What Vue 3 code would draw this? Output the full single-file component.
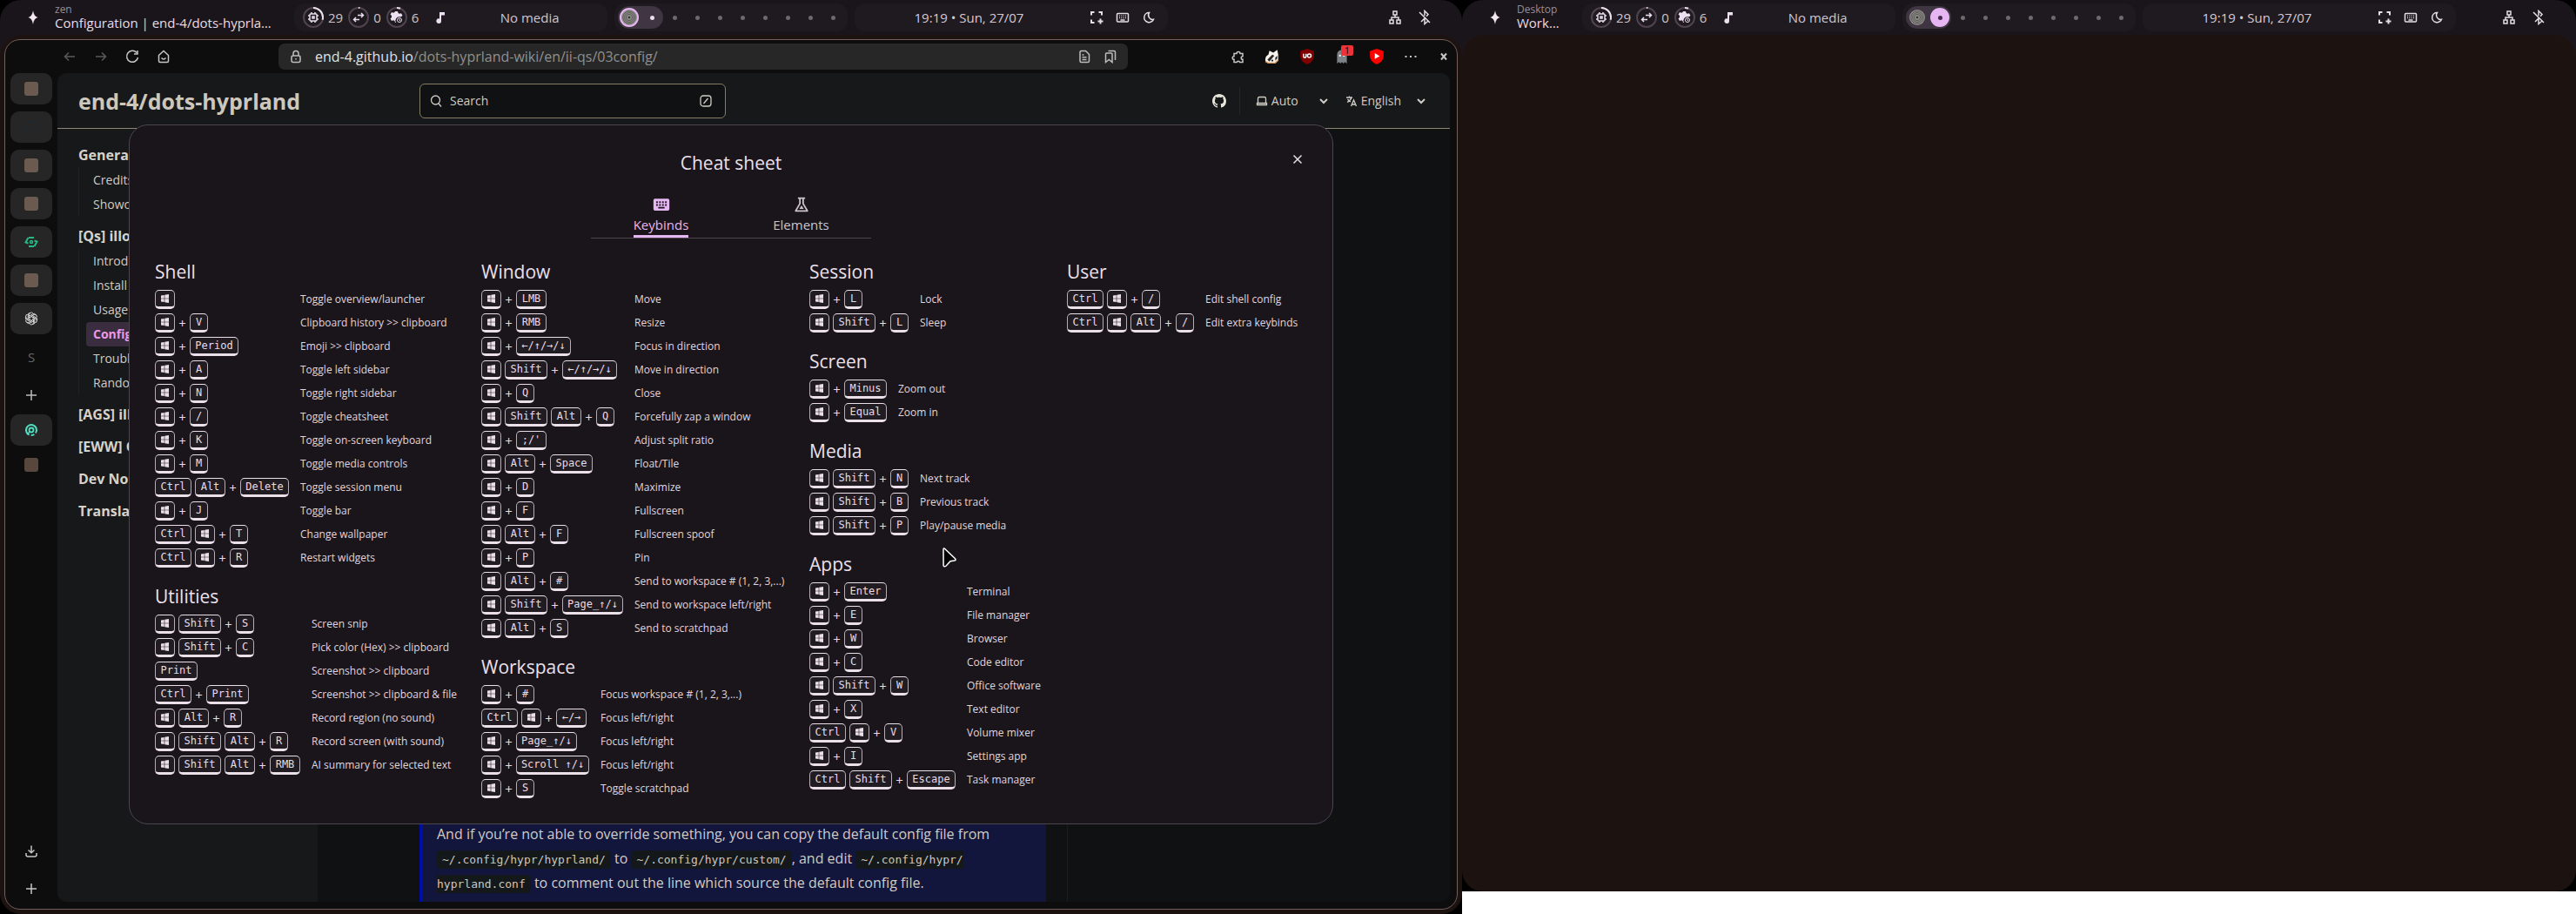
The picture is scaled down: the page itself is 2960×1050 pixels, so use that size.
<script setup>
const monitors = [
  { id: 'main', app: 'zen', title: 'Configuration | end-4/dots-hyprla…', active: 0, browser: true },
  { id: 'side', app: 'Desktop', title: 'Work…', active: 1, browser: false }
]

const resources = [
  { icon: 'cpu', value: 29 },
  { icon: 'swap', value: 0 },
  { icon: 'gear', value: 6 }
]

const W = 'Super'
const columns = [
  [
    {
      title: 'Shell',
      binds: [
        [[W], '', 'Toggle overview/launcher'],
        [[W], 'V', 'Clipboard history >> clipboard'],
        [[W], 'Period', 'Emoji >> clipboard'],
        [[W], 'A', 'Toggle left sidebar'],
        [[W], 'N', 'Toggle right sidebar'],
        [[W], '/', 'Toggle cheatsheet'],
        [[W], 'K', 'Toggle on-screen keyboard'],
        [[W], 'M', 'Toggle media controls'],
        [['Ctrl', 'Alt'], 'Delete', 'Toggle session menu'],
        [[W], 'J', 'Toggle bar'],
        [['Ctrl', W], 'T', 'Change wallpaper'],
        [['Ctrl', W], 'R', 'Restart widgets']
      ]
    },
    {
      title: 'Utilities',
      binds: [
        [[W, 'Shift'], 'S', 'Screen snip'],
        [[W, 'Shift'], 'C', 'Pick color (Hex) >> clipboard'],
        [['Print'], '', 'Screenshot >> clipboard'],
        [['Ctrl'], 'Print', 'Screenshot >> clipboard & file'],
        [[W, 'Alt'], 'R', 'Record region (no sound)'],
        [[W, 'Shift', 'Alt'], 'R', 'Record screen (with sound)'],
        [[W, 'Shift', 'Alt'], 'RMB', 'AI summary for selected text']
      ]
    }
  ],
  [
    {
      title: 'Window',
      binds: [
        [[W], 'LMB', 'Move'],
        [[W], 'RMB', 'Resize'],
        [[W], '←/↑/→/↓', 'Focus in direction'],
        [[W, 'Shift'], '←/↑/→/↓', 'Move in direction'],
        [[W], 'Q', 'Close'],
        [[W, 'Shift', 'Alt'], 'Q', 'Forcefully zap a window'],
        [[W], ";/'", 'Adjust split ratio'],
        [[W, 'Alt'], 'Space', 'Float/Tile'],
        [[W], 'D', 'Maximize'],
        [[W], 'F', 'Fullscreen'],
        [[W, 'Alt'], 'F', 'Fullscreen spoof'],
        [[W], 'P', 'Pin'],
        [[W, 'Alt'], '#', 'Send to workspace # (1, 2, 3,...)'],
        [[W, 'Shift'], 'Page_↑/↓', 'Send to workspace left/right'],
        [[W, 'Alt'], 'S', 'Send to scratchpad']
      ]
    },
    {
      title: 'Workspace',
      binds: [
        [[W], '#', 'Focus workspace # (1, 2, 3,...)'],
        [['Ctrl', W], '←/→', 'Focus left/right'],
        [[W], 'Page_↑/↓', 'Focus left/right'],
        [[W], 'Scroll ↑/↓', 'Focus left/right'],
        [[W], 'S', 'Toggle scratchpad']
      ]
    }
  ],
  [
    {
      title: 'Session',
      binds: [
        [[W], 'L', 'Lock'],
        [[W, 'Shift'], 'L', 'Sleep']
      ]
    },
    {
      title: 'Screen',
      binds: [
        [[W], 'Minus', 'Zoom out'],
        [[W], 'Equal', 'Zoom in']
      ]
    },
    {
      title: 'Media',
      binds: [
        [[W, 'Shift'], 'N', 'Next track'],
        [[W, 'Shift'], 'B', 'Previous track'],
        [[W, 'Shift'], 'P', 'Play/pause media']
      ]
    },
    {
      title: 'Apps',
      binds: [
        [[W], 'Enter', 'Terminal'],
        [[W], 'E', 'File manager'],
        [[W], 'W', 'Browser'],
        [[W], 'C', 'Code editor'],
        [[W, 'Shift'], 'W', 'Office software'],
        [[W], 'X', 'Text editor'],
        [['Ctrl', W], 'V', 'Volume mixer'],
        [[W], 'I', 'Settings app'],
        [['Ctrl', 'Shift'], 'Escape', 'Task manager']
      ]
    }
  ],
  [
    {
      title: 'User',
      binds: [
        [['Ctrl', W], '/', 'Edit shell config'],
        [['Ctrl', W, 'Alt'], '/', 'Edit extra keybinds']
      ]
    }
  ]
]

const keyWidth = (key) => ({ width: `${key.length * 7 + 14}px` })

const nav = [
  { title: 'General', links: ['Credits', 'Showcase'] },
  { title: '[Qs] illo…', links: ['Introdu…', 'Install', 'Usage', 'Config', 'Trouble', 'Random'] },
  { title: '[AGS] illo…', links: [] },
  { title: '[EWW] Ol…', links: [] },
  { title: 'Dev Notes', links: [] },
  { title: 'Translate', links: [] }
]

const tabs = ['blank', 'cat', 'blank', 'blank', 'leaf', 'blank', 'knot']
</script>

<template>
  <div class="desktop">
    <section v-for="m in monitors" :key="m.id" class="monitor" :class="m.id">
      <header class="bar">
        <div class="bar-left">
          <svg class="spark" viewBox="0 0 20 20"><path d="M10 2c.9 4.900 2.200 6.800 5.500 8-3.300 1.200-4.600 3.100-5.500 8-.9-4.900-2.200-6.800-5.500-8C7.800 8.800 9.100 6.900 10 2z" /></svg>
          <div class="win">
            <span class="win-app">{{ m.app }}</span>
            <span class="win-title">{{ m.title }}</span>
          </div>
        </div>

        <div class="bar-mid">
          <div class="pill side-pill stats">
            <div v-for="r in resources" :key="r.icon" class="res">
              <svg class="ring" viewBox="0 0 24 24">
                <circle class="track" cx="12" cy="12" r="11" />
                <circle class="arc" cx="12" cy="12" r="11" pathLength="100" :stroke-dasharray="`${r.value || 2} 100`" transform="rotate(-90 12 12)" />
                <g v-if="r.icon === 'cpu'" class="glyph thin">
                  <rect x="8" y="8" width="8" height="8" rx="1" /><rect x="11" y="11" width="2" height="2" />
                  <path d="M10 6v2M14 6v2M10 16v2M14 16v2M6 10h2M6 14h2M16 10h2M16 14h2" />
                </g>
                <g v-else-if="r.icon === 'swap'" class="glyph thin">
                  <path d="M11 9.500h6.500M15 7l2.500 2.500L15 12M13 14.500H6.500M9 12l-2.500 2.500L9 17" />
                </g>
                <g v-else>
                  <path class="solid" d="M10 5h3l.5 2 1.500.8 2-.6 1.500 2.600-1.500 1.400h-2a4.500 4.500 0 0 0-4 6.800h-1l-.5-1.900-1.500-.8-2 .6-1.500-2.600L6 11.900v-1.800L4.500 8.700 6 6.100l2 .6L9.500 6z" />
                  <circle class="mini" cx="15" cy="15" r="2.500" /><path class="mini" d="M15 13.600V15l1 1" />
                </g>
              </svg>
              <span>{{ r.value }}</span>
            </div>
            <svg class="note" viewBox="0 0 14 16"><path d="M6 2h6v3.500H8V12a2.800 2.800 0 1 1-2-2.600z" /></svg>
            <span class="media">No media</span>
          </div>

          <div class="pill spaces">
            <span v-for="n in 10" :key="n" class="space" :class="{ busy: n < 3, first: n === 1, last: n === 2, on: n - 1 === m.active }">
              <svg v-if="n === 1" class="zen" viewBox="0 0 20 20">
                <circle cx="10" cy="10" r="10" class="zen-bg" />
                <circle cx="10" cy="10" r="8" /><circle cx="10" cy="10" r="6" /><circle cx="10" cy="10" r="4" />
                <circle cx="10" cy="10" r="1.500" class="zen-dot" />
              </svg>
              <i v-else class="dot" />
            </span>
          </div>

          <div class="pill side-pill">
            <span class="clock">19:19 • Sun, 27/07</span>
            <button class="tool" aria-label="Screenshot"><svg viewBox="0 0 16 16"><path d="M2 5.500V2h3.500M10.500 2H14v3.500M2 10.500V14h3.500M12.500 9.500v6M9.500 12.500h6" /></svg></button>
            <button class="tool" aria-label="Keyboard"><svg viewBox="0 0 16 16"><rect x="1.500" y="3.500" width="13" height="9.500" rx="1" /><path d="M4 6.200h1M6.300 6.200h1M8.700 6.200h1M11 6.200h1M4 8.500h1M6.300 8.500h1M8.700 8.500h1M11 8.500h1M5.500 11h5" stroke-width="1.300" /></svg></button>
            <button class="tool" aria-label="Dark mode"><svg viewBox="0 0 16 16"><path d="M8.500 2.500a5.600 5.600 0 1 0 5 7.800A5 5 0 0 1 8.500 2.500z" /></svg></button>
          </div>
        </div>

        <div class="bar-right">
          <svg viewBox="0 0 18 18"><rect x="7" y="2" width="4" height="4" /><rect x="3" y="12" width="4" height="4" /><rect x="11" y="12" width="4" height="4" /><path d="M9 6v3M5 12V9h8v3" /></svg>
          <svg viewBox="0 0 18 18"><path d="M3 3l12 12M5 14l4-4v6.500l3.500-3M9 7V1.500L13 5.500l-2 2.200" /></svg>
        </div>
      </header>

      <main class="area">
        <div v-if="m.browser" class="browser">
          <div class="toolbar">
            <div class="nav-buttons">
              <button class="ghost faded" aria-label="Back"><svg viewBox="0 0 16 16"><path d="M14 8H2.500M7 3.500L2.500 8 7 12.500" /></svg></button>
              <button class="ghost faded" aria-label="Forward"><svg viewBox="0 0 16 16"><path d="M2 8h11.500M9 3.500L13.500 8 9 12.500" /></svg></button>
              <button class="ghost" aria-label="Reload"><svg viewBox="0 0 16 16"><path d="M13 3.500A6.500 6.500 0 1 0 14.500 9M14 1v4h-4" /></svg></button>
              <button class="ghost" aria-label="Home"><svg viewBox="0 0 16 16"><path d="M2.500 6.500L8 1.500l5.500 5V13q0 1.500-1.500 1.500H4Q2.500 14.500 2.500 13zM5.500 9.500q2.500 3 5 0" /></svg></button>
            </div>
            <div class="address">
              <svg viewBox="0 0 16 16"><rect x="3" y="7" width="10" height="7.500" rx="2" /><path d="M5 7V4.500a3 3 0 0 1 6 0V7M8 10v1.500" /></svg>
              <span class="url"><b>end-4.github.io</b>/dots-hyprland-wiki/en/ii-qs/03config/</span>
              <svg viewBox="0 0 16 16"><path d="M4.500 1.500h5l4 4v7.500q0 1.500-1.500 1.500H4.500Q3 14.500 3 13V3q0-1.500 1.500-1.500zM5.500 6h2M5.500 8.800h5M5.500 11.500h5" /></svg>
              <svg viewBox="0 0 16 16"><path d="M2.500 5q0-1 1-1H9q1 0 1 1v9.500L6.300 11.500 2.500 14.500zM5.500 1.500h6.500q1.500 0 1.500 1.500v9" /></svg>
            </div>
            <div class="addons">
              <button class="ghost" aria-label="Extensions"><svg viewBox="0 0 16 16"><path d="M3 4.500h3a2 2 0 1 1 4 0h3v3.200a1.800 1.800 0 1 0 0 3.600v3.200H9.500a1.700 1.700 0 0 0-3.300 0H3v-3.200a1.800 1.800 0 1 1 0-3.600z" /></svg></button>
              <svg class="addon" viewBox="0 0 16 16"><path d="M1 13q-1-5 3-7l1-4 4 2 4-3 1 5v6l-4 3H4z" fill="#f5f1ec" /><path d="M3 11l5-5 2 1-5 6zM11 9l2-2v3l-2 2z" fill="#2b2725" /><path d="M1 13l3 1.500h7l3-3" fill="none" stroke="#d99a62" stroke-width="1.200" /><circle cx="8" cy="12" r="1" fill="#222" /></svg>
              <svg class="addon" viewBox="0 0 16 16"><path d="M8 0l7 2.500V7q0 6-7 9Q1 13 1 7V2.500z" fill="#800000" /><path d="M4.300 5v2.800a1.300 1.300 0 0 0 2.600 0V5" fill="none" stroke="#fff" stroke-width="1.300" /><circle cx="10.200" cy="7.200" r="1.800" fill="none" stroke="#fff" stroke-width="1.300" /></svg>
              <span class="badged">
                <svg class="addon" viewBox="0 0 16 16"><path d="M3 15V6a5 5 0 0 1 10 0v9l-2-1.500L9.500 15 8 13.500 6.500 15 5 13.500z" fill="#7d8287" /><circle cx="6" cy="7" r="1" fill="#fff" /><circle cx="10" cy="7" r="1" fill="#fff" /></svg>
                <em class="badge">1</em>
              </span>
              <svg class="addon" viewBox="0 0 16 16"><path d="M8 0l7 2.500V7q0 6-7 9Q1 13 1 7V2.500z" fill="#f00" /><path d="M6 4.500l5 3-5 3z" fill="#fff" /></svg>
              <button class="ghost" aria-label="Menu"><svg viewBox="0 0 16 16"><path d="M1.500 8h2M7 8h2M12.500 8h2" stroke-width="2" /></svg></button>
              <button class="ghost" aria-label="Close window"><svg viewBox="0 0 16 16"><path d="M5 4.500l6 7M11 4.500l-6 7" stroke-width="2" /></svg></button>
            </div>
          </div>

          <div class="browser-body">
            <aside class="tabstrip">
              <div v-for="(t, i) in tabs" :key="i" class="tab filled">
                <i v-if="t === 'blank'" class="favicon" />
                <svg v-else-if="t === 'cat'" viewBox="0 0 16 16"><path d="M4.500 14A7 7 0 1 1 11.500 14" fill="none" stroke="#1f282e" stroke-width="2" stroke-dasharray="5 1" /></svg>
                <svg v-else-if="t === 'leaf'" viewBox="0 0 16 16" fill="none" stroke="#26b983" stroke-width="2"><path d="M5 3h6M11 13H5M4.500 3L1.500 8.500l3 1M11.500 13l3-5.500-3-1" /><circle cx="8" cy="8" r="1.500" stroke-width="1.500" /></svg>
                <svg v-else viewBox="0 0 16 16" fill="none" stroke="#d6d6d6" stroke-width="1">
                  <g v-for="a in 6" :key="a" :transform="`rotate(${a * 60} 8 8)`"><path d="M8 5.700L5.500 7V3.500a2.500 2.500 0 0 1 4.300-1.700M5.800 5l3.900-2.300a2.500 2.500 0 0 1 3.400 1" /></g>
                </svg>
              </div>
              <div class="tab letter">S</div>
              <div class="tab"><svg viewBox="0 0 16 16"><path d="M8 2v12M2 8h12" stroke="#bdbdbd" stroke-width="1.500" /></svg></div>
              <div class="tab filled tight">
                <svg viewBox="0 0 16 16" fill="none" stroke="#4fe0c3"><circle cx="8" cy="8" r="6" stroke-width="2" stroke-dasharray="24 2 4 2" transform="rotate(160 8 8)" /><circle cx="8" cy="8" r="2.500" stroke-width="1.800" /><path d="M3 13l3-3" stroke-width="1.500" /></svg>
              </div>
              <div class="tab"><i class="favicon dim" /></div>
              <div class="tab-foot">
                <button class="ghost" aria-label="Downloads"><svg viewBox="0 0 16 16"><path d="M8 1.500v8M4.500 6.500L8 9.700l3.500-3.200M2 10v2q0 2 2 2h8q2 0 2-2v-2" /></svg></button>
                <button class="ghost" aria-label="New tab"><svg viewBox="0 0 16 16"><path d="M8 2v12M2 8h12" /></svg></button>
              </div>
            </aside>

            <div class="site">
              <div class="site-head">
                <a class="site-title" href="#">end-4/dots-hyprland</a>
                <button class="search">
                  <svg viewBox="0 0 16 16"><circle cx="7.500" cy="7" r="5" /><path d="M11 11l3 3.500" /></svg>
                  <span>Search</span>
                  <svg viewBox="0 0 16 16"><rect x="2" y="2" width="12" height="12" rx="3" /><path d="M5.500 11l5-6" /></svg>
                </button>
                <div class="site-tools">
                  <a class="github" href="#" aria-label="GitHub"><svg viewBox="0 0 16 16"><path d="M8 0C3.580 0 0 3.580 0 8c0 3.540 2.290 6.530 5.470 7.590.4.070.55-.17.55-.38 0-.19-.01-.82-.01-1.490-2.010.37-2.530-.49-2.690-.94-.09-.23-.48-.94-.82-1.130-.28-.15-.68-.52-.01-.53.63-.01 1.080.58 1.230.82.72 1.210 1.870.87 2.330.66.07-.52.28-.87.51-1.070-1.780-.2-3.640-.89-3.640-3.950 0-.87.31-1.590.82-2.150-.08-.2-.36-1.020.08-2.120 0 0 .67-.21 2.200.82.64-.18 1.320-.27 2-.27s1.360.09 2 .27c1.530-1.040 2.200-.82 2.200-.82.44 1.100.16 1.920.08 2.120.51.56.82 1.270.82 2.150 0 3.070-1.870 3.750-3.650 3.950.29.25.54.73.54 1.480 0 1.070-.01 1.930-.01 2.200 0 .21.15.46.55.38A8.010 8.010 0 0 0 16 8c0-4.420-3.580-8-8-8z" /></svg></a>
                  <button class="pick theme">
                    <svg viewBox="0 0 14 14"><path d="M2.500 9V4q0-1.500 1.500-1.500h6q1.500 0 1.500 1.500v5M1.500 9.500h11v2h-11z" /></svg>
                    <span>Auto</span>
                    <svg class="chev" viewBox="0 0 14 14"><path d="M3 5l4 4 4-4" /></svg>
                  </button>
                  <button class="pick">
                    <svg viewBox="0 0 14 14"><path d="M1 3h7M4.500 1.500V3M7 3q-1 3.500-5 5.500M2.500 5q1.500 2 3.500 3M6.500 13L9.500 6l3 7M7.500 11h4" /></svg>
                    <span>English</span>
                    <svg class="chev" viewBox="0 0 14 14"><path d="M3 5l4 4 4-4" /></svg>
                  </button>
                </div>
              </div>

              <div class="site-body">
                <nav class="side-nav">
                  <div v-for="g in nav" :key="g.title" class="nav-group">
                    <strong>{{ g.title }}</strong>
                    <ul v-if="g.links.length">
                      <li v-for="l in g.links" :key="l"><a href="#" :class="{ current: l === 'Config' }">{{ l }}</a></li>
                    </ul>
                  </div>
                </nav>
                <article class="doc">
                  <p class="callout">And if you’re not able to override something, you can copy the default config file from <br><code>~/.config/hypr/hyprland/</code> to <code>~/.config/hypr/custom/</code>, and edit <code>~/.config/hypr/<br>hyprland.conf</code> to comment out the line which source the default config file.</p>
                </article>
                <div class="toc" />
              </div>
            </div>
          </div>
        </div>

        <div v-if="m.browser" class="overlay">
          <section class="sheet">
            <button class="close" aria-label="Close"><svg viewBox="0 0 16 16"><path d="M3.500 3.500l9 9M12.500 3.500l-9 9" /></svg></button>
            <h1>Cheat sheet</h1>
            <div class="sheet-tabs">
              <button class="sheet-tab selected">
                <svg viewBox="0 0 24 24"><path fill-rule="evenodd" d="M4 4.500h16q2 0 2 2v11q0 2-2 2H4q-2 0-2-2v-11q0-2 2-2zM5.500 8v2h2V8zM9.200 8v2h2V8zM12.900 8v2h2V8zM16.600 8v2h2V8zM5.500 11.500v2h2v-2zM9.200 11.500v2h2v-2zM12.900 11.500v2h2v-2zM16.600 11.500v2h2v-2zM8 15v2h8v-2z" /></svg>
                <span>Keybinds</span>
              </button>
              <button class="sheet-tab">
                <svg viewBox="0 0 24 24"><path fill-rule="evenodd" d="M7.500 3h9v2H15v5.500l5 8.500q1 2-1 2H5q-2 0-1-2l5-8.500V5H7.500zM11 5v6l-4.800 8h11.600L13 11V5zM12 13l2.800 4.500H9.200z" /></svg>
                <span>Elements</span>
              </button>
            </div>
            <div class="columns">
              <div v-for="(col, c) in columns" :key="c" class="column">
                <section v-for="s in col" :key="s.title">
                  <h2>{{ s.title }}</h2>
                  <table>
                    <tbody>
                      <tr v-for="([mods, key, label], i) in s.binds" :key="i">
                        <th scope="row">
                          <div class="combo">
                            <template v-for="k in mods" :key="k">
                              <kbd v-if="k === W" class="super"><svg viewBox="0 0 9 10" aria-label="Super"><path d="M0 1.500l3.700-.6v3.800H0zM4.300.8L9 0v4.700H4.300zM0 5.300h3.700v3.800L0 8.500zM4.300 5.300H9V10l-4.700-.8z" /></svg></kbd>
                              <kbd v-else :style="keyWidth(k)">{{ k }}</kbd>
                            </template>
                            <template v-if="key"><span class="plus">+</span><kbd :style="keyWidth(key)">{{ key }}</kbd></template>
                          </div>
                        </th>
                        <td>{{ label }}</td>
                      </tr>
                    </tbody>
                  </table>
                </section>
              </div>
            </div>
          </section>
          <svg class="cursor" viewBox="0 0 18 24"><path d="M2 3.500q0-2.500 2-.8l11.500 11q1.600 2-.8 2.300l-4.700.8-4.800 5.200q-2.700 2-3.100-.7z" /></svg>
        </div>
      </main>
    </section>
  </div>
</template>

<style>
body { margin: 0; background: #fff; }
</style>

<style scoped>
.desktop {
  display: grid;
  grid-template-columns: 1680fr 1280fr;
  min-height: 100vh;
  font-family: "Open Sans", "Noto Sans", sans-serif;
  font-size: 15px;
  color: #e6dde5;
}
.desktop *, .desktop *::before { box-sizing: border-box; }
h1, h2, p, ul { margin: 0; padding: 0; font-weight: 400; list-style: none; }
button { font: inherit; color: inherit; background: none; border: 0; padding: 0; }
a { color: inherit; text-decoration: none; }
svg { display: block; flex: none; }

.monitor { display: flex; flex-direction: column; min-width: 0; background: #000; overflow: hidden; }
.side { margin-bottom: 26px; }

/* top bar */
.bar {
  display: grid;
  grid-template-columns: 1fr auto 1fr;
  align-items: center;
  height: 40px;
  background: #1a151b;
  border-radius: 24px 24px 0 0;
}
.bar-left { display: flex; align-items: center; gap: 15px; padding-left: 28px; min-width: 0; }
.spark { width: 20px; height: 20px; fill: #f3e9f2; }
.win { display: flex; flex-direction: column; white-space: nowrap; line-height: 18px; }
.win-app { font-size: 12px; line-height: 12px; color: #978e97; }
.bar-mid { display: flex; gap: 8px; }
.pill { display: flex; align-items: center; height: 32px; background: #1f1a1f; border-radius: 12px; }
.side-pill { width: 360px; padding: 0 7px 0 0; }
.stats { gap: 6px; padding: 0 0 0 10px; color: #cfc5ce; }
.res { display: flex; align-items: center; gap: 5px; }
.ring { width: 24px; height: 24px; fill: none; }
.track { stroke: #4f4350; stroke-width: 2; }
.arc { stroke: #ecdfee; stroke-width: 2; }
.glyph { stroke: #ecdff0; stroke-width: 2; }
.thin { stroke-width: 1.5; }
.solid { fill: #ecdff0; }
.mini { stroke: #ecdff0; stroke-width: 1; }
.note { width: 14px; height: 16px; margin-left: 12px; fill: #ecdff0; }
.media { flex: 1; text-align: center; }
.spaces { padding: 0 4px; }
.space { display: grid; place-items: center; width: 26px; height: 26px; position: relative; }
.dot { width: 5px; height: 5px; border-radius: 50%; background: #6e686f; }
.busy { background: #403543; }
.first { border-radius: 13px 0 0 13px; }
.last { border-radius: 0 13px 13px 0; }
.busy .dot { background: #ecdfee; }
.on::before { content: ""; position: absolute; inset: 2px; border-radius: 50%; background: #e5b6f2; }
.on .dot, .on .zen { position: relative; }
.on .dot { background: #452b4e; }
.zen { width: 18px; height: 18px; fill: none; stroke: #55534f; stroke-width: 1; }
.zen-bg { fill: #8f8d8a; stroke: none; }
.zen-dot { fill: #333; stroke: none; }
.clock { flex: 1; text-align: center; color: #d6c9d3; }
.tool { display: grid; place-items: center; width: 30px; height: 32px; }
.tool svg, .bar-right svg { width: 16px; height: 16px; fill: none; stroke: #e6dde5; stroke-width: 2; }
.tool rect, .tool:last-child path { stroke-width: 1.5; }
.bar-right { display: flex; justify-content: flex-end; gap: 16px; padding-right: 34px; }
.bar-right svg { width: 18px; height: 18px; stroke-width: 1.5; }

/* workspace area */
.area { flex: 1; display: flex; position: relative; padding: 5px; background: #1c1210; border-radius: 0 0 24px 24px; }
.area::before {
  content: "";
  position: absolute;
  inset: 0 0 auto;
  height: 24px;
  background:
    radial-gradient(circle at 24px 24px, transparent 23px, #1a151b 24px) 0 0 / 24px 24px no-repeat,
    radial-gradient(circle at 0 24px, transparent 23px, #1a151b 24px) 100% 0 / 24px 24px no-repeat;
}

/* browser */
.browser {
  position: relative;
  flex: 1;
  display: flex;
  flex-direction: column;
  min-width: 0;
  background: #0d0d0d;
  border: 1px solid #735f5d;
  border-radius: 18px;
  padding-bottom: 8px;
}
.toolbar { display: flex; align-items: center; height: 38px; }
.nav-buttons { display: flex; gap: 20px; flex: 0 0 314px; padding-left: 66px; }
.ghost { display: grid; place-items: center; width: 16px; height: 20px; color: #c6c6c6; }
.ghost svg, .address svg { width: 16px; height: 16px; fill: none; stroke: currentColor; stroke-width: 1.5; }
.faded { color: #5a5a5a; }
.address { flex: 1; display: flex; align-items: center; gap: 14px; height: 30px; padding: 0 12px; background: #272727; border-radius: 7px; font-size: 16px; color: #8f8f8f; }
.address svg { color: #bdbdbd; }
.url { flex: 1; }
.url b { font-weight: 400; color: #e0e0e0; }
.addons { display: flex; align-items: center; justify-content: flex-end; flex: 0 0 378px; gap: 22px; padding-right: 7px; }
.addon { width: 18px; height: 18px; }
.badged { position: relative; }
.badge { position: absolute; left: 8px; top: -4px; width: 14px; height: 12px; background: #ee3338; border-radius: 2px; font: 11px/12px "Open Sans", sans-serif; text-align: center; color: #200; }
.browser-body { flex: 1; display: flex; min-height: 0; }

.tabstrip { display: flex; flex-direction: column; gap: 8px; width: 60px; padding: 0 6px; }
.tab { display: grid; place-items: center; height: 36px; border-radius: 10px; }
.tab svg { width: 16px; height: 16px; }
.filled { background: #262626; }
.tight { margin: -4px 0; }
.letter { color: #666; }
.favicon { width: 16px; height: 16px; border-radius: 3px; background: #6b5a4f; }
.dim { background: #58473d; }
.tab-foot { margin-top: auto; display: flex; flex-direction: column; align-items: center; gap: 23px; padding-bottom: 5px; }

/* site */
.site { flex: 1; display: flex; flex-direction: column; min-width: 0; margin-right: 8px; border-radius: 10px; overflow: hidden; background: #0f1113; color: #d0cbc3; }
.site-head { display: flex; align-items: center; height: 64px; padding: 0 26px 0 24px; background: #17181a; border-bottom: 1px solid #8f8776; font-size: 14px; }
.site-title { flex: 0 0 392px; font-size: 25px; font-weight: 700; color: #cdc7bd; }
.search { display: flex; align-items: center; gap: 8px; width: 352px; height: 40px; padding: 0 14px 0 10px; background: #0f1113; border: 1px solid #857c66; border-radius: 6px; text-align: left; }
.search span { flex: 1; }
.search svg, .pick svg { width: 16px; height: 16px; fill: none; stroke: #d0cbc3; stroke-width: 1.3; }
.site-tools { margin-left: auto; display: flex; align-items: center; gap: 18px; }
.github { display: flex; align-items: center; height: 32px; padding-right: 15px; border-right: 1px solid #232527; }
.github svg { width: 16px; height: 16px; fill: #e8e4da; }
.pick { display: flex; align-items: center; gap: 4px; }
.pick svg { width: 14px; height: 14px; }
.pick .chev { stroke-width: 2; margin-left: 12px; }
.theme .chev { margin-left: 18px; }

.site-body { flex: 1; display: flex; min-height: 0; }
.side-nav { flex: 0 0 299px; padding: 8px 24px; background: #17181a; }
.nav-group { margin-top: 7px; }
.side-nav strong { display: block; font-size: 16px; line-height: 30px; font-weight: 700; color: #d6d2ca; }
.side-nav ul { border-left: 1px solid #1f2123; padding-left: 8px; }
.side-nav a { display: block; padding: 0 8px; line-height: 28px; font-size: 14px; border-radius: 4px; }
.side-nav .current { background: #3b2d40; color: #eb99e6; font-weight: 700; }
.doc { flex: 1; display: flex; align-items: flex-end; padding-left: 117px; }
.callout { flex: 1; padding: 20px 0 8px 16px; border-left: 4px solid #000fa3; background: #12163c; font-size: 16px; line-height: 28px; }
.callout code { font: 13px "DejaVu Sans Mono", "Liberation Mono", monospace; padding: 3px 6px; background: #15181a; border-radius: 4px; color: #cbc7bd; }
.toc { flex: 0 0 440px; margin-left: 24px; border-left: 1px solid #1a1c1e; }

/* cheat sheet */
.overlay { position: absolute; inset: 0; display: grid; place-items: center; }
.sheet { position: relative; width: min(1384px, 98%); padding: 29px; background: #1a151b; border: 1px solid #4c454d; border-radius: 22px; }
.close { position: absolute; top: 19px; right: 20px; display: grid; place-items: center; width: 40px; height: 40px; }
.close svg { width: 16px; height: 16px; stroke: #e6dde5; stroke-width: 1.5; }
h1, h2 { font-size: 21px; color: #ebe0ea; }
h1 { line-height: 28px; text-align: center; }
.sheet-tabs { display: flex; width: 322px; margin: 22px auto 26px; border-bottom: 1px solid #4c464d; color: #cdc3cc; }
.sheet-tab { flex: 1; display: flex; flex-direction: column; align-items: center; line-height: 22px; }
.sheet-tab svg { width: 24px; height: 24px; padding: 1px; fill: currentColor; }
.sheet-tab span { height: 26px; }
.selected { color: #e5b6f2; }
.selected span { border-bottom: 3px solid #e5b6f2; }
.columns { display: grid; grid-template-columns: 375fr 377fr 296fr 276fr; }
.column { display: flex; flex-direction: column; gap: 21px; }
h2 { line-height: 25px; padding-bottom: 8px; }
table { border-collapse: collapse; font-size: 12px; line-height: 22px; }
th, td { height: 27px; padding: 0 0 5px; text-align: left; vertical-align: top; font-weight: 400; white-space: nowrap; }
tr:last-child > * { height: 22px; padding-bottom: 0; }
th { padding-right: 13px; }
td { color: #e0d6df; }
.combo { display: flex; align-items: center; gap: 4px; height: 22px; }
kbd { display: grid; place-items: center; height: 22px; background: #211b22; border: 1px solid #b5acb5; border-top-color: #ebe0ea; border-bottom: 3px solid #ebe0ea; border-radius: 5px; font: 12px/16px "DejaVu Sans Mono", "Liberation Mono", monospace; color: #e6dbe5; white-space: pre; }
.super { width: 23px; }
.super svg { width: 9px; height: 10px; fill: #ebe0ea; }
.plus { width: 9px; text-align: center; font-size: 15px; line-height: 20px; }
.cursor { position: absolute; left: 1082px; top: 588px; width: 18px; height: 24px; fill: #000; stroke: #fff; stroke-width: 1.5; }
</style>
